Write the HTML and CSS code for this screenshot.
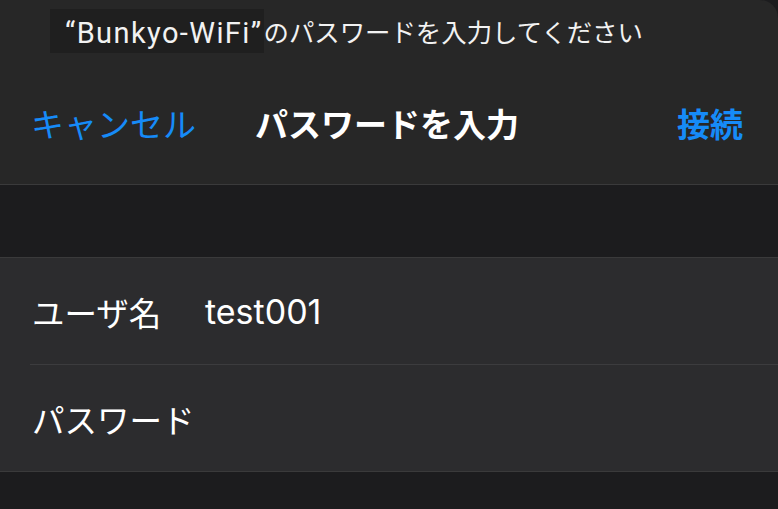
FILE: index.html
```html
<!DOCTYPE html>
<html lang="ja">
<head>
<meta charset="utf-8">
<link rel="stylesheet" href="styles.css">
</head>
<body>
<div class="screen">
  <header class="header">
    <div class="prompt"><span class="ssid">“Bunkyo-WiFi”</span>のパスワードを入力してください</div>
    <nav class="nav">
      <span class="cancel">キャンセル</span>
      <span class="title">パスワードを入力</span>
      <span class="join">接続</span>
    </nav>
  </header>
  <div class="spacer"></div>
  <section class="group">
    <div class="row">
      <div class="row-inner">
        <span class="label">ユーザ名</span>
        <span class="value">test001</span>
      </div>
    </div>
    <div class="row">
      <div class="row-inner last">
        <span class="label">パスワード</span>
      </div>
    </div>
  </section>
  <div class="footer"></div>
</div>
</body>
</html>
```

FILE: styles.css
```css
html, body {
  margin: 0;
  padding: 0;
  background: #0e0e0e;
}
.screen {
  width: 778px;
  height: 509px;
  overflow: hidden;
  background: #1c1c1e;
  font-family: "Inter", "Noto Sans CJK JP", sans-serif;
  color: #fff;
}
.header {
  height: 184px;
  background: #272727;
  border-top-right-radius: 18px;
  border-bottom: 1px solid #3a3a3b;
}
.prompt {
  padding: 9px 0 0 50px;
  height: 44px;
  line-height: 48px;
  font-size: 25.4px;
  color: #f2f2f2;
  white-space: nowrap;
}
.ssid {
  display: inline-block;
  vertical-align: top;
  background: #1f1f1f;
  padding: 0 1px 0 15px;
  height: 44px;
  font-family: "Roboto", "Noto Sans CJK JP", sans-serif;
  font-size: 29px;
  letter-spacing: 1.4px;
  line-height: 48px;
}
.nav {
  display: grid;
  grid-template-columns: 1fr auto 1fr;
  align-items: center;
  height: 64px;
  margin-top: 38px;
  padding: 0 35px 0 31px;
  font-size: 33px;
}
.cancel {
  color: #168bf8;
  justify-self: start;
}
.title {
  font-weight: 700;
}
.join {
  color: #168bf8;
  font-weight: 700;
  justify-self: end;
}
.spacer {
  height: 72px;
  background: #1c1c1e;
  border-bottom: 1px solid #3a3a3b;
}
.group {
  background: #2c2c2e;
}
.row {
  padding-left: 30px;
}
.row-inner {
  height: 106px;
  display: flex;
  align-items: center;
  border-bottom: 1px solid #3c3c3e;
  font-size: 32.5px;
  padding-left: 2px;
}
.row-inner.last {
  border-bottom: none;
}
.label {
  width: 173px;
  flex: none;
}
.value {
  font-size: 34px;
}
.footer {
  border-top: 1px solid #3a3a3b;
  height: 40px;
  background: #1c1c1e;
}
```
